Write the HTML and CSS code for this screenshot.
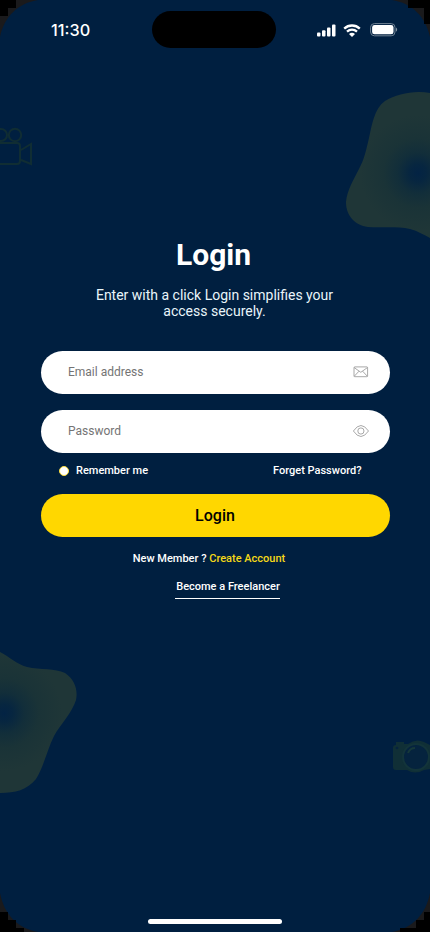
FILE: index.html
```html
<!DOCTYPE html>
<html lang="en">
<head>
<meta charset="utf-8">
<meta name="viewport" content="width=device-width, initial-scale=1">
<title>Login</title>
<link rel="stylesheet" href="styles.css">
</head>
<body>
<div class="phone">
  <svg class="corners" viewBox="0 0 430 932" aria-hidden="true">
    <path fill="#1a1a1c" d="M0 0H38C18 3 4 17 0 37ZM430 0H392C412 3 426 17 430 37ZM0 932V893C4 914 17 928 38 932ZM430 932V893C426 914 413 928 392 932Z"/>
    <path fill="#000" d="M0 0H16V8H8V16H0ZM408 0H430V24H424V8H408ZM0 912H8V920H16V928H24V932H0ZM430 912H424V920H416V928H400V932H430Z"/>
  </svg>
  <svg class="decor" viewBox="0 0 430 932" aria-hidden="true">
    <defs>
      <radialGradient id="glowTop" gradientUnits="userSpaceOnUse" cx="418" cy="173" r="58">
        <stop offset="0" stop-color="#032344"/><stop offset=".15" stop-color="#072640"/><stop offset=".35" stop-color="#122e3a"/><stop offset=".6" stop-color="#1a3337"/><stop offset="1" stop-color="#1f3637"/>
      </radialGradient>
      <radialGradient id="glowBottom" gradientUnits="userSpaceOnUse" cx="4" cy="713" r="58">
        <stop offset="0" stop-color="#032344"/><stop offset=".15" stop-color="#072640"/><stop offset=".35" stop-color="#122e3a"/><stop offset=".6" stop-color="#1a3337"/><stop offset="1" stop-color="#1f3637"/>
      </radialGradient>
    </defs>
    <path fill="url(#glowTop)" d="M430 93C414 90 397 94 385 101C374 109 372 125 369 138C366 151 364 160 359 169C354 179 347 190 346 202C346 216 355 225 368 227C382 228 397 226 410 229C418 231 424 235 430 238Z"/>
    <path fill="url(#glowBottom)" d="M0 652C10 657 16 664 27 667C40 670 55 668 65 673C75 680 78 690 76 700C72 713 60 725 54 736C47 750 44 766 36 779C27 790 15 793 0 793Z"/>
    <g fill="none" stroke="#102d33" stroke-width="2">
      <circle cx="1" cy="135" r="6"/><circle cx="15" cy="135" r="6.2"/>
      <path d="M0 143H17Q20 143 20 146V161Q20 164 17 164H0M21 150L31 144V164L21 160"/>
    </g>
    <path fill="#102f36" d="M393 748Q393 745 396 745V742H404V744H408Q416 738 424 742L430 745V769L424 770Q415 775 407 770H396Q393 770 393 767Z"/>
    <circle cx="416" cy="757" r="13" fill="#05233e" stroke="#13343a" stroke-width="2"/>
    <path d="M408 753Q410 748 415 748" fill="none" stroke="#16383a" stroke-width="2"/>
    <circle cx="397" cy="748" r="1.3" fill="#05233e"/>
  </svg>

  <header class="status">
    <time class="clock">11:30</time>
    <div class="island"></div>
    <div class="indicators">
      <svg width="19" height="13" viewBox="0 0 19 13" fill="#fff"><rect y="8.5" width="3.5" height="4" rx="1"/><rect x="5" y="6.2" width="3.5" height="6.3" rx="1"/><rect x="10" y="3.4" width="3.5" height="9.1" rx="1"/><rect x="15" y=".4" width="3.5" height="12.1" rx="1"/></svg>
      <svg width="18" height="13" viewBox="0 0 18 13" fill="none" stroke="#fff" stroke-width="2.3"><path d="M1.2 4.6Q4.5 1.5 9 1.5T16.8 4.6M4 7.6Q6.2 5.6 9 5.6T14 7.6"/><path fill="#fff" stroke="none" d="M6 10Q9 7.6 12 10L9 12.9Z"/></svg>
      <svg width="28" height="14" viewBox="0 0 28 14"><rect x=".6" y=".6" width="24.4" height="12.2" rx="3.8" fill="none" stroke="#6f8293"/><rect x="2.1" y="2.1" width="21.4" height="9.2" rx="2.4" fill="#fff"/><path d="M26 4.6Q28.3 6.7 26 8.8Z" fill="#8191a0"/></svg>
    </div>
  </header>

  <main class="content">
    <h1 class="title">Login</h1>
    <p class="intro">Enter with a click Login simplifies your<br>access securely.</p>
    <form class="form">
      <div class="field">
        <span>Email address</span>
        <svg width="16" height="12" viewBox="0 0 16 12" fill="none" stroke="#929292" stroke-width=".8"><rect x="1" y=".9" width="13.6" height="9.8" rx=".8"/><path d="M1.2 1.6L7.8 6.3L14.4 1.6M1.3 10.2L6 5.2M14.3 10.2L9.6 5.2"/></svg>
      </div>
      <div class="field">
        <span>Password</span>
        <svg width="16" height="12" viewBox="0 0 16 12" fill="none" stroke="#929292" stroke-width=".8"><path d="M.4 6Q7.9-5 15.5 6Q7.9 17 .4 6Z"/><circle cx="7.9" cy="6" r="3.1"/></svg>
      </div>
      <div class="options">
        <label class="remember"><i class="radio"></i>Remember me</label>
        <a>Forget Password?</a>
      </div>
      <button class="submit" type="button">Login</button>
    </form>
    <p class="signup">New Member ? <a class="create">Create Account</a></p>
    <a class="freelancer">Become a Freelancer</a>
  </main>
  <div class="home-bar"></div>
</div>
</body>
</html>
```
FILE: styles.css
```css
* { box-sizing: border-box; }
body { margin: 0; background: #001f40; font-family: Roboto, sans-serif; color: #fff; }
h1, p { margin: 0; }
.phone { position: relative; width: 430px; height: 932px; overflow: hidden; background: #001f40; display: flex; flex-direction: column; align-items: center; }
.corners, .decor { position: absolute; inset: 0; width: 430px; height: 932px; pointer-events: none; }
.status { position: relative; width: 100%; height: 60px; padding: 11px 32px 0 51px; display: grid; grid-template-columns: 101px 124px 1fr; align-items: start; }
.clock { font: 550 16.3px/38px Inter, sans-serif; }
.island { height: 37px; border-radius: 19px; background: #000; }
.indicators { display: flex; justify-content: flex-end; align-items: center; gap: 7px; height: 38px; }
.indicators svg + svg + svg { margin-left: 2px; }
.content { position: relative; width: 349px; margin-top: 177px; display: flex; flex-direction: column; align-items: center; }
.title { margin-right: 3px; font-size: 30px; line-height: 36px; font-weight: 700; }
.intro { margin: 14px 1px 0 0; font-size: 14px; line-height: 16px; text-align: center; color: #e9f5fa; }
.form { width: 100%; margin-top: 32px; display: flex; flex-direction: column; }
.field { height: 43px; padding: 0 21px 2px 27.5px; border-radius: 22px; background: #fff; color: #747474; font-size: 12px; display: flex; align-items: center; justify-content: space-between; }
.field + .field { margin-top: 16px; }
.options { height: 41px; padding: 11px 28px 0 18px; display: flex; justify-content: space-between; font-size: 11px; font-weight: 500; line-height: 13px; }
.remember { display: flex; gap: 7.5px; }
.radio { width: 10px; height: 10px; margin-top: 2px; border: 1px solid #ffdf3b; border-radius: 50%; background: #fff; }
.submit { height: 43px; padding: 0; border: 0; border-radius: 22px; background: #ffd700; color: #000; font: 500 16px/19px Roboto, sans-serif; }
.signup { margin: 15px 12px 0 0; font-size: 11px; line-height: 13px; font-weight: 500; }
.create { color: #f5d917; }
.freelancer { margin: 15px 0 0 25px; padding: 0 0 5px 1px; border-bottom: 1px solid #fff; font-size: 11px; line-height: 13px; font-weight: 500; }
.home-bar { position: relative; width: 134px; height: 5px; margin: auto 0 8px; border-radius: 3px; background: #fff; }
```
